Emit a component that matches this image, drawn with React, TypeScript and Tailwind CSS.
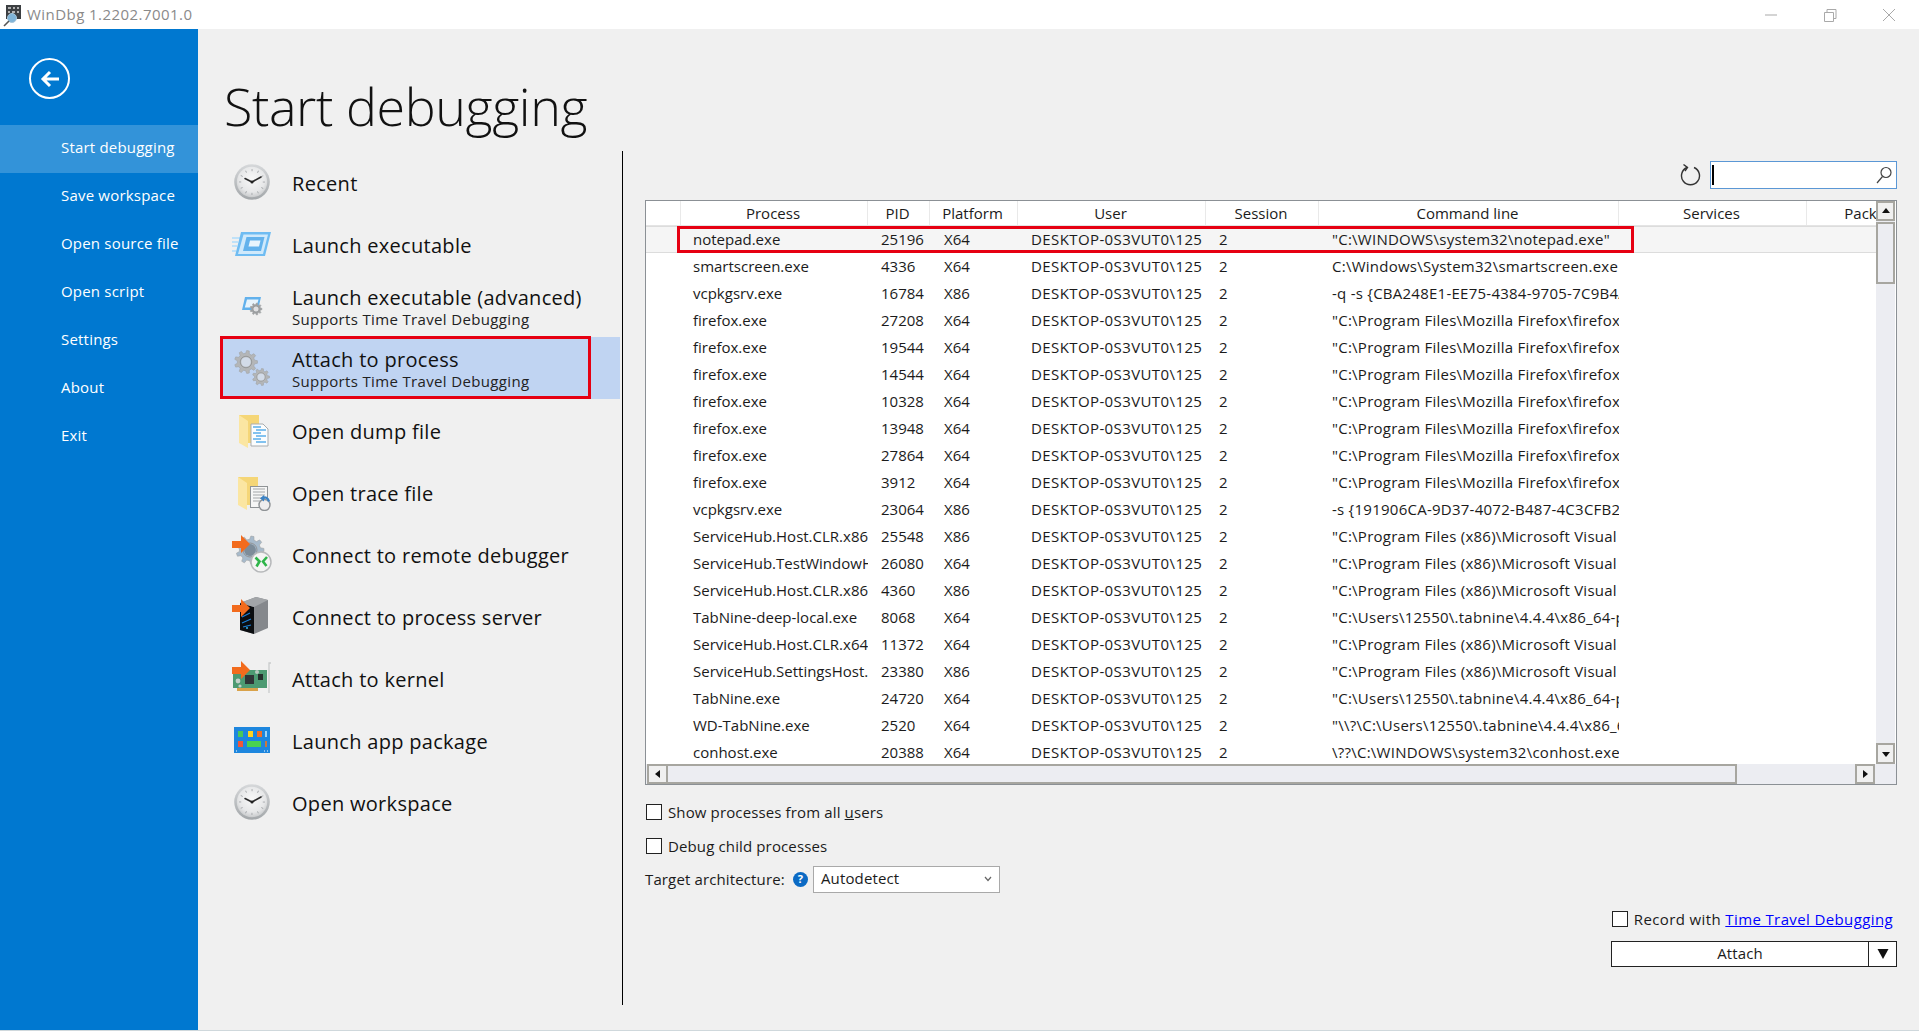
import { ReactNode } from 'react';

const font = "font-['Open_Sans','Liberation_Sans',sans-serif]";

const navItems = ['Start debugging', 'Save workspace', 'Open source file', 'Open script', 'Settings', 'About', 'Exit'];

const firefoxCmd = '"C:\\Program Files\\Mozilla Firefox\\firefox.exe" -contentproc';
const vsCmd = '"C:\\Program Files (x86)\\Microsoft Visual Studio\\2019';

const processes = [
  ['notepad.exe', '25196', 'X64', '"C:\\WINDOWS\\system32\\notepad.exe"'],
  ['smartscreen.exe', '4336', 'X64', 'C:\\Windows\\System32\\smartscreen.exe'],
  ['vcpkgsrv.exe', '16784', 'X86', '-q -s {CBA248E1-EE75-4384-9705-7C9B4A1D}'],
  ['firefox.exe', '27208', 'X64', firefoxCmd],
  ['firefox.exe', '19544', 'X64', firefoxCmd],
  ['firefox.exe', '14544', 'X64', firefoxCmd],
  ['firefox.exe', '10328', 'X64', firefoxCmd],
  ['firefox.exe', '13948', 'X64', firefoxCmd],
  ['firefox.exe', '27864', 'X64', firefoxCmd],
  ['firefox.exe', '3912', 'X64', firefoxCmd],
  ['vcpkgsrv.exe', '23064', 'X86', '-s {191906CA-9D37-4072-B487-4C3CFB2E}'],
  ['ServiceHub.Host.CLR.x86.exe', '25548', 'X86', vsCmd],
  ['ServiceHub.TestWindowHost.exe', '26080', 'X64', vsCmd],
  ['ServiceHub.Host.CLR.x86.exe', '4360', 'X86', vsCmd],
  ['TabNine-deep-local.exe', '8068', 'X64', '"C:\\Users\\12550\\.tabnine\\4.4.4\\x86_64-pc-windows'],
  ['ServiceHub.Host.CLR.x64.exe', '11372', 'X64', vsCmd],
  ['ServiceHub.SettingsHost.exe', '23380', 'X86', vsCmd],
  ['TabNine.exe', '24720', 'X64', '"C:\\Users\\12550\\.tabnine\\4.4.4\\x86_64-pc-windows'],
  ['WD-TabNine.exe', '2520', 'X64', '"\\\\?\\C:\\Users\\12550\\.tabnine\\4.4.4\\x86_64-pc'],
  ['conhost.exe', '20388', 'X64', '\\??\\C:\\WINDOWS\\system32\\conhost.exe 0x4'],
];

function gearPath(cx: number, cy: number, r: number, teeth: number) {
  const pts: string[] = [];
  const step = (Math.PI * 2) / teeth;
  for (let i = 0; i < teeth; i++) {
    const a = i * step;
    const corners: [number, number][] = [
      [a - step * 0.3, r * 0.76],
      [a - step * 0.16, r],
      [a + step * 0.16, r],
      [a + step * 0.3, r * 0.76],
    ];
    corners.forEach(([t, d]) => pts.push(`${(cx + Math.cos(t) * d).toFixed(2)},${(cy + Math.sin(t) * d).toFixed(2)}`));
  }
  return pts.join(' ');
}

function Gear({ cx, cy, r, fill = '#b4b6b8', hole = '#dfe0e2' }: { cx: number; cy: number; r: number; fill?: string; hole?: string }) {
  return (
    <g>
      <polygon points={gearPath(cx, cy, r, 9)} fill={fill} stroke="#a0a2a4" strokeWidth="0.6" />
      <circle cx={cx} cy={cy} r={r * 0.5} fill="none" stroke="#8f9193" strokeWidth={r * 0.07} />
      <circle cx={cx} cy={cy} r={r * 0.42} fill={hole} />
    </g>
  );
}

function OrangeArrow() {
  return <polygon points="0,9 9,9 9,3 18,12 9,21 9,16 0,16" fill="#f26b1d" />;
}

function ClockIcon() {
  return (
    <svg width="36" height="36" viewBox="0 0 36 36">
      <defs>
        <radialGradient id="face" cx="50%" cy="40%" r="62%">
          <stop offset="0%" stopColor="#f8f8f8" />
          <stop offset="70%" stopColor="#e6e7e8" />
          <stop offset="100%" stopColor="#c6c8ca" />
        </radialGradient>
        <linearGradient id="rim" x1="0" y1="0" x2="0" y2="1">
          <stop offset="0%" stopColor="#d6d8da" />
          <stop offset="100%" stopColor="#a3a7aa" />
        </linearGradient>
      </defs>
      <circle cx="18" cy="18" r="17.8" fill="url(#rim)" />
      <circle cx="18" cy="18" r="15.2" fill="url(#face)" />
      {[0, 30, 60, 90, 120, 150, 180, 210, 240, 270, 300, 330].map((a) => (
        <rect key={a} x="17.6" y="5" width="0.9" height="2.2" fill="#a5a8ab" transform={`rotate(${a} 18 18)`} />
      ))}
      <path d="M11 14.500L18 18L27 13" fill="none" stroke="#2a2a2a" strokeWidth="1.6" strokeLinecap="round" />
      <circle cx="18" cy="18" r="1.5" fill="#222" />
    </svg>
  );
}

function LaunchIcon() {
  return (
    <svg width="40" height="26" viewBox="0 0 40 26">
      <path d="M0 7h8M0 11h6M0 15h5M0 20h4" stroke="#bfe1f8" strokeWidth="2" />
      <polygon points="9,1 39,1 33,25 3,25" fill="#6fbcf2" />
      <polygon points="11.500,3.500 36,3.500 31,23 6,23" fill="#cfe9fb" />
      <polygon points="14.500,6 32.500,6 29,20 11,20" fill="#63b2ec" />
      <polygon points="18,9.500 28.500,9.500 27,15.500 16.500,15.500" fill="#e9f5fd" />
    </svg>
  );
}

function AdvancedIcon() {
  return (
    <svg width="22" height="20" viewBox="0 0 22 20">
      <polygon points="4,1 20,1 17,14 1,14" fill="#62b1ec" />
      <polygon points="6,3.500 17.500,3.500 15,11.500 3.800,11.500" fill="#e8f4fc" />
      <Gear cx={15} cy={13} r={6} fill="#9ea0a2" />
    </svg>
  );
}

function GearsIcon() {
  return (
    <svg width="36" height="37" viewBox="0 0 36 37">
      <Gear cx={12} cy={12} r={11.500} hole="#d2dbe8" />
      <Gear cx={27} cy={27} r={8.500} hole="#d2dbe8" />
    </svg>
  );
}

function FolderBack() {
  return (
    <>
      <path d="M5 4h20v28H5z" fill="#f5d677" />
      <path d="M5 4l9 6v27l-9-5z" fill="#fbe6a2" />
    </>
  );
}

function DumpIcon() {
  return (
    <svg width="36" height="38" viewBox="0 0 36 38">
      <FolderBack />
      <path d="M17 13h12l5 5v17H17z" fill="#fbfdfe" stroke="#a9acae" />
      {[16, 19, 22, 25, 28, 31].map((y, i) => (
        <path key={y} d={`M${i % 2 ? 22 : 19} ${y}H${i % 2 ? 32 : 27}`} stroke="#5aaeea" strokeWidth="1.5" />
      ))}
    </svg>
  );
}

function TraceIcon() {
  return (
    <svg width="38" height="38" viewBox="0 0 38 38">
      <FolderBack />
      <rect x="17.500" y="13.500" width="17" height="21" fill="#f6f6f6" stroke="#8f9396" />
      {[16, 19, 22, 25, 28].map((y) => (
        <path key={y} d={`M20 ${y}H32`} stroke="#a3a6a8" />
      ))}
      <circle cx="31.500" cy="32" r="5.500" fill="#eee" stroke="#8f9396" strokeWidth="1.400" />
      <path d="M29 25.500c3-2 6-1 7 3" fill="none" stroke="#3b82c4" strokeWidth="2.400" />
      <path d="M31 22l-4 3.500 4 3z" fill="#3b82c4" />
    </svg>
  );
}

function RemoteIcon() {
  return (
    <svg width="40" height="38" viewBox="0 0 40 38">
      <Gear cx={18} cy={15} r={14} fill="#a7bacb" hole="#7d8c99" />
      <g transform="translate(0,-3)">
        <OrangeArrow />
      </g>
      <circle cx="29" cy="27" r="10" fill="#f4f4f4" stroke="#b7b9bb" strokeWidth="1.500" />
      <path d="M23.500 22.500l4 4-3 5M35 22l-4 4.500 3.500 4.500" fill="none" stroke="#2fb54a" strokeWidth="2.600" />
    </svg>
  );
}

function ServerIcon() {
  return (
    <svg width="40" height="38" viewBox="0 0 40 38">
      <polygon points="8,6 24,0 36,3 36,31 22,37 8,33" fill="#85888c" />
      <polygon points="8,6 22,10 22,37 8,33" fill="#0b0d10" />
      <polygon points="8,6 24,0 36,3 22,10" fill="#a2a5a8" />
      <path d="M10 20l8-4M10 26l9-4M11 30l8-2" stroke="#1c80d8" strokeWidth="1.200" fill="none" />
      <circle cx="15" cy="31" r="1" fill="#35b5e8" />
      <g transform="translate(0,-1)">
        <OrangeArrow />
      </g>
    </svg>
  );
}

function KernelIcon() {
  return (
    <svg width="40" height="34" viewBox="0 0 40 34">
      <path d="M39 2h-2v30" fill="none" stroke="#c9cbcc" strokeWidth="1.300" />
      <rect x="1" y="9" width="34" height="18" fill="#4c9a72" />
      <rect x="5" y="27" width="21" height="3" fill="#d9a24a" />
      <rect x="13" y="14" width="9" height="9" fill="#2f3537" />
      <rect x="26" y="13" width="5" height="6" fill="#24302d" />
      <circle cx="25" cy="11" r="2" fill="#b9c9c1" />
      <circle cx="6" cy="20" r="2.400" fill="#c2d0ca" />
      <circle cx="8" cy="25" r="1.600" fill="#c2d0ca" />
      <g transform="translate(0,-3)">
        <OrangeArrow />
      </g>
    </svg>
  );
}

function AppPackageIcon() {
  return (
    <svg width="36" height="26" viewBox="0 0 36 26">
      <rect width="36" height="26" fill="#1d86de" />
      <rect x="4" y="4" width="5" height="6" fill="#49c85a" />
      <rect x="14" y="4" width="5" height="6" fill="#ffd320" />
      <rect x="23" y="4" width="5" height="6" fill="#f36f26" />
      <rect x="31" y="4" width="2" height="6" fill="#9ed2f4" />
      <rect x="4" y="14" width="5" height="6" fill="#f0563a" />
      <rect x="13" y="14" width="14" height="6" fill="#49d24f" />
      <rect x="31" y="14" width="2" height="6" fill="#c9783f" />
      <path d="M2 24h1M30 24h1M33 24h1" stroke="#fff" />
    </svg>
  );
}

const actions: { icon: ReactNode; title: string; sub?: string; selected?: boolean }[] = [
  { icon: <ClockIcon />, title: 'Recent' },
  { icon: <LaunchIcon />, title: 'Launch executable' },
  { icon: <AdvancedIcon />, title: 'Launch executable (advanced)', sub: 'Supports Time Travel Debugging' },
  { icon: <GearsIcon />, title: 'Attach to process', sub: 'Supports Time Travel Debugging', selected: true },
  { icon: <DumpIcon />, title: 'Open dump file' },
  { icon: <TraceIcon />, title: 'Open trace file' },
  { icon: <RemoteIcon />, title: 'Connect to remote debugger' },
  { icon: <ServerIcon />, title: 'Connect to process server' },
  { icon: <KernelIcon />, title: 'Attach to kernel' },
  { icon: <AppPackageIcon />, title: 'Launch app package' },
  { icon: <ClockIcon />, title: 'Open workspace' },
];

const colClass = 'grid grid-cols-[35px_187px_62px_88px_188px_113px_300px_188px_134px]';

function ScrollButton({ path, className }: { path: string; className: string }) {
  return (
    <div className={`flex items-center justify-center border-2 border-[#a7a6a0] bg-[#f0f0f0] ${className}`}>
      <svg width="10" height="10" viewBox="0 0 10 10">
        <polygon points={path} fill="#111" />
      </svg>
    </div>
  );
}

function Checkbox() {
  return <div className="h-[16px] w-[16px] shrink-0 border border-[#222] bg-white" />;
}

function TitleBar() {
  return (
    <div className="flex h-[29px] shrink-0 items-center bg-white">
      <svg className="ml-[3px]" width="19" height="24" viewBox="0 0 19 24">
        <rect x="3" y="2" width="15" height="14" fill="#3c3f42" />
        <path d="M5 5h3M10 5h2M14 5h2M5 9h2M9 9h3M14 9h2" stroke="#d8d8d8" strokeWidth="1.400" />
        <circle cx="9" cy="15" r="4.500" fill="#7fb4d8" stroke="#a7c6da" />
        <path d="M6 18L1 23" stroke="#555" strokeWidth="1.600" />
      </svg>
      <span className="ml-[5px] text-[15px] tracking-[0.45px] text-[#8a8a8a]">WinDbg 1.2202.7001.0</span>
      <svg className="ml-auto mr-[24px]" width="130" height="16" viewBox="0 0 130 16">
        <path d="M0 8h12" stroke="#a9a9a9" />
        <path d="M59.500 5.500h9v9h-9zM62 5V2.500h9v9h-2.500" fill="none" stroke="#a9a9a9" />
        <path d="M118 2l12 12M130 2l-12 12" stroke="#a9a9a9" />
      </svg>
    </div>
  );
}

function Sidebar() {
  return (
    <aside className="w-[198px] shrink-0 bg-[#0078d0] text-white">
      <div className="flex h-[96px] items-start pl-[29px] pt-[29px]">
        <div className="flex h-[41px] w-[41px] items-center justify-center rounded-full border-2 border-white">
          <svg width="22" height="20" viewBox="0 0 22 20" fill="none" stroke="#fff" strokeWidth="3">
            <path d="M20 10H4M11 3l-7 7 7 7" />
          </svg>
        </div>
      </div>
      {navItems.map((item, i) => (
        <div key={item} className={`flex h-[48px] items-center pb-[3px] pl-[61px] text-[15px] tracking-[0.2px] ${i === 0 ? 'bg-[#3393d9]' : ''}`}>
          {item}
        </div>
      ))}
    </aside>
  );
}

function ActionList() {
  return (
    <div className="w-[425px] shrink-0 border-r border-black pl-[23px] pr-[2px]">
      {actions.map((a) => (
        <div key={a.title} className={`relative flex h-[62px] items-center ${a.selected ? 'bg-[#c0d4f2]' : ''}`}>
          {a.selected && <div className="absolute -left-px -top-px h-[63px] w-[371px] border-[3px] border-[#e60012]" />}
          <div className="flex w-[71px] justify-center pr-[10px]">{a.icon}</div>
          <div className="flex flex-col">
            <span className={`text-[20px] leading-[25px] tracking-[0.3px] text-[#111] ${a.sub ? 'pt-[1px]' : 'pt-[2px]'}`}>{a.title}</span>
            {a.sub && <span className="text-[15px] leading-[18px] tracking-[0.35px] text-[#222]">{a.sub}</span>}
          </div>
        </div>
      ))}
    </div>
  );
}

function ProcessTable() {
  return (
    <div className="flex h-[585px] flex-col border border-[#8b9095] bg-white text-[15px] leading-[22px] tracking-normal text-[#1b1b1b]">
      <div className="flex min-h-0 flex-1">
        <div className="min-w-0 flex-1 overflow-hidden">
          <div className={`${colClass} h-[24px] w-[1295px] items-center text-center`}>
            {['', 'Process', 'PID', 'Platform', 'User', 'Session', 'Command line', 'Services', 'Package'].map((h, i) => (
              <div key={h} className={`flex h-full items-center justify-center overflow-hidden whitespace-nowrap border-r border-[#e9e9e9] pr-[2px] ${i === 8 ? 'border-r-0' : ''}`}>
                {h}
              </div>
            ))}
          </div>
          <div className="h-[1px] bg-[#e4e4e4]" />
          {processes.map((p, i) => (
            <div key={p[1]} className={`${colClass} relative h-[27px] w-[1295px] items-center pb-[2px] ${i === 0 ? 'border-y border-[#dcdcdc] bg-[#f5f5f5]' : ''}`}>
              <div />
              <div className="overflow-hidden whitespace-nowrap pl-[12px]">{p[0]}</div>
              <div className="pl-[13px]">{p[1]}</div>
              <div className="pl-[14px]">{p[2]}</div>
              <div className="overflow-hidden whitespace-nowrap pl-[13px] tracking-[0.4px]">DESKTOP-0S3VUT0\125</div>
              <div className="pl-[13px]">2</div>
              <div className="overflow-hidden whitespace-nowrap pl-[13px] pr-[3px] tracking-[0.25px]">{p[3]}</div>
              <div />
              <div />
              {i === 0 && <div className="absolute left-[31px] top-[-1px] h-[27px] w-[957px] border-[3px] border-[#e60012]" />}
            </div>
          ))}
        </div>
        <div className="flex w-[19px] shrink-0 flex-col bg-[#ecedf2]">
          <ScrollButton path="1,7 5,2 9,7" className="h-[20px] shrink-0" />
          <div className="mt-px h-[62px] border-2 border-[#a7a6a0] bg-[#ecedf2]" />
          <div className="flex-1" />
          <ScrollButton path="1,3 5,8 9,3" className="h-[21px] shrink-0" />
        </div>
        <div className="w-[1px] shrink-0" />
      </div>
      <div className="flex h-[20px] shrink-0 bg-[#ecedf2] pl-[1px] pr-[21px]">
        <ScrollButton path="7,1 2,5 7,9" className="w-[21px] shrink-0" />
        <div className="h-full w-[1069px] border-y-2 border-r-2 border-[#a7a6a0]" />
        <div className="flex-1" />
        <ScrollButton path="3,1 8,5 3,9" className="w-[20px] shrink-0" />
      </div>
    </div>
  );
}

function AttachPanel() {
  return (
    <div className="min-w-0 flex-1 pl-[22px] pr-[22px] pt-[10px] text-[15px] tracking-[0.13px] text-[#1b1b1b]">
      <div className="flex h-[28px] items-center justify-end">
        <svg className="mr-[8px]" width="22" height="24" viewBox="0 0 22 24" fill="none" stroke="#333" strokeWidth="1.400">
          <path d="M7 4.500A9 9 0 1 0 14 4.500" />
          <path d="M3.500 1.500L7.500 4.500L5 8" />
        </svg>
        <div className="flex h-[28px] w-[187px] items-center justify-between border border-[#5b97d5] bg-white pl-[1px] pr-[3px]">
          <div className="h-[20px] w-[2px] bg-black" />
          <svg width="18" height="20" viewBox="0 0 18 20" fill="none" stroke="#444" strokeWidth="1.200">
            <circle cx="11" cy="7.500" r="5" />
            <path d="M7.500 11.500L2 18" />
          </svg>
        </div>
      </div>
      <div className="mt-[11px]">
        <ProcessTable />
      </div>
      <label className="mt-[19px] flex h-[16px] items-center gap-[6px] pl-px">
        <Checkbox />
        <span>
          Show processes from all <span className="underline">u</span>sers
        </span>
      </label>
      <label className="mt-[18px] flex h-[16px] items-center gap-[6px] pl-px">
        <Checkbox />
        <span>Debug child processes</span>
      </label>
      <div className="mt-[12px] flex h-[27px] items-center">
        <span className="w-[142px] whitespace-nowrap">Target architecture:</span>
        <div className="ml-[6px] flex h-[15px] w-[15px] items-center justify-center rounded-full bg-[#0b6ac4] text-[11px] font-bold text-white">?</div>
        <div className="ml-[5px] flex h-[27px] w-[187px] items-center justify-between border border-[#a9a9a9] bg-white pb-[2px] pl-[7px] pr-[7px]">
          <span>Autodetect</span>
          <svg width="8" height="6" viewBox="0 0 8 6" fill="none" stroke="#666" strokeWidth="1.200">
            <path d="M1 1l3 3.500L7 1" />
          </svg>
        </div>
      </div>
      <div className="mt-[18px] flex h-[16px] items-center justify-end gap-[6px] pr-[4px] tracking-[0.38px]">
        <Checkbox />
        <span>
          Record with <a className="text-[#0000ff] underline">Time Travel Debugging</a>
        </span>
      </div>
      <div className="ml-auto mt-[14px] flex h-[26px] w-[286px] border border-[#222] bg-white">
        <div className="flex flex-1 items-center justify-center pb-[2px]">Attach</div>
        <div className="flex w-[28px] items-center justify-center border-l border-[#222]">
          <svg width="12" height="12" viewBox="0 0 12 12">
            <polygon points="0.500,1 11.500,1 6,11" fill="#111" />
          </svg>
        </div>
      </div>
    </div>
  );
}

export default function App() {
  return (
    <div className={`flex h-[1031px] w-full flex-col overflow-hidden bg-[#f0f0f0] ${font}`}>
      <TitleBar />
      <div className="flex min-h-0 flex-1">
        <Sidebar />
        <main className="flex min-w-0 flex-1 flex-col">
          <h1 className="flex h-[122px] shrink-0 items-start pl-[26px] pt-[39px] text-[52px] font-light leading-[76px] tracking-[-0.4px] text-[#111]">
            Start debugging
          </h1>
          <div className="flex h-[854px] shrink-0">
            <ActionList />
            <AttachPanel />
          </div>
        </main>
      </div>
      <div className="h-px shrink-0 bg-[#cfd8dc]" />
    </div>
  );
}
